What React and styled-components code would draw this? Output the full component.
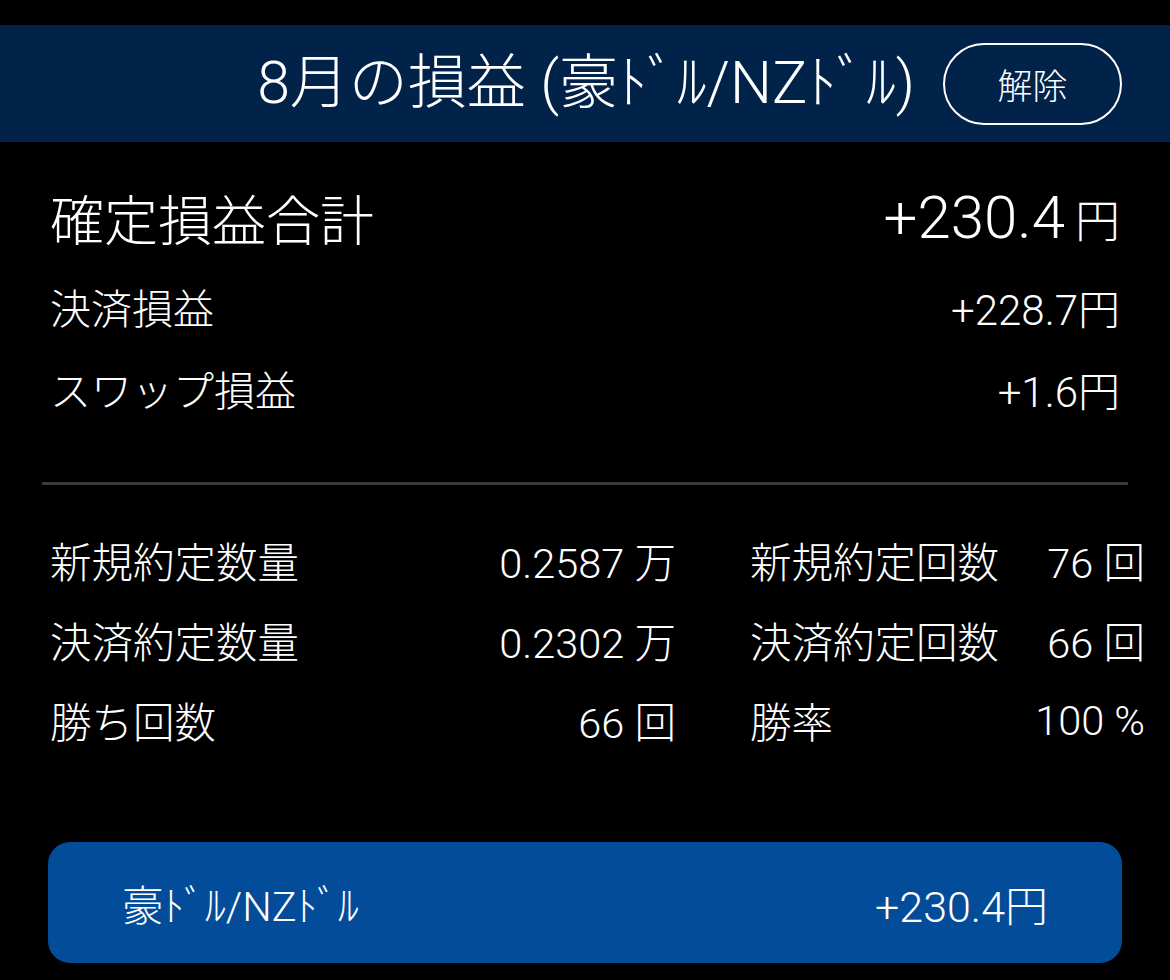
import styled, { createGlobalStyle } from 'styled-components';

const GlobalStyle = createGlobalStyle`
  html, body {
    margin: 0;
    padding: 0;
    background: #000;
  }
  body {
    font-family: Roboto, "Noto Sans CJK JP", sans-serif;
    font-weight: 300;
    color: #fff;
  }
`;

const stats = [
  { id: 1, label: '新規約定数量', value: '0.2587', unit: '万' },
  { id: 2, label: '新規約定回数', value: '76', unit: '回' },
  { id: 3, label: '決済約定数量', value: '0.2302', unit: '万' },
  { id: 4, label: '決済約定回数', value: '66', unit: '回' },
  { id: 5, label: '勝ち回数', value: '66', unit: '回' },
  { id: 6, label: '勝率', value: '100', unit: '%' },
];

function App() {
  return (
    <>
      <GlobalStyle />
      <Page>
        <Header>
          <Title>8月の損益 (豪ﾄﾞﾙ/NZﾄﾞﾙ)</Title>
          <ClearButton type="button">解除</ClearButton>
        </Header>

        <Summary>
          <TotalRow>
            <span>確定損益合計</span>
            <Amount>
              +230.4<Yen>円</Yen>
            </Amount>
          </TotalRow>
          <SubRow>
            <span>決済損益</span>
            <span>+228.7円</span>
          </SubRow>
          <SubRow>
            <span>スワップ損益</span>
            <span>+1.6円</span>
          </SubRow>
        </Summary>

        <Divider />

        <StatsGrid>
          {stats.map(({ id, label, value, unit }) => (
            <StatCell key={id}>
              <span>{label}</span>
              <span>
                {value} {unit}
              </span>
            </StatCell>
          ))}
        </StatsGrid>

        <PairCard>
          <span>豪ﾄﾞﾙ/NZﾄﾞﾙ</span>
          <span>+230.4円</span>
        </PairCard>
      </Page>
    </>
  );
}

const Page = styled.div`
  width: 1170px;
  height: 980px;
  padding-top: 25px;
  box-sizing: border-box;
  background: #000;
  overflow: hidden;
`;

const Header = styled.header`
  height: 117px;
  display: flex;
  align-items: center;
  justify-content: flex-end;
  gap: 28px;
  padding-right: 48px;
  background: #012349;
`;

const Title = styled.h1`
  margin: 0 0 3px;
  font-size: 59px;
  font-weight: 300;
  line-height: 1;
  white-space: nowrap;
`;

const ClearButton = styled.button`
  width: 179px;
  height: 82px;
  border: 2.5px solid #fff;
  border-radius: 41px;
  background: transparent;
  color: #fff;
  font-family: Roboto, "Noto Sans CJK JP", sans-serif;
  font-weight: 300;
  font-size: 35px;
  padding: 0;
  cursor: pointer;
`;

const Summary = styled.section`
  padding: 35px 50px 0;
`;

const TotalRow = styled.div`
  height: 80px;
  display: flex;
  align-items: center;
  justify-content: space-between;
  font-size: 54px;
  margin-bottom: 8px;
`;

const Amount = styled.span`
  font-size: 60px;
  display: flex;
  align-items: baseline;
`;

const Yen = styled.span`
  font-size: 45px;
  margin-left: 10px;
`;

const SubRow = styled.div`
  height: 82px;
  display: flex;
  align-items: center;
  justify-content: space-between;
  font-size: 41px;

  span:last-child {
    font-size: 42px;
  }
`;

const Divider = styled.hr`
  margin: 53px 42px 0;
  border: none;
  height: 3px;
  background: #3a3a3a;
`;

const StatsGrid = styled.div`
  display: grid;
  grid-template-columns: 626px 395px;
  column-gap: 74px;
  grid-auto-rows: 80px;
  padding: 35px 25px 0 50px;
`;

const StatCell = styled.div`
  display: flex;
  align-items: center;
  justify-content: space-between;
  font-size: 41.5px;
  white-space: pre;
`;

const PairCard = styled.div`
  margin: 82px 48px 0;
  height: 121px;
  border-radius: 22px;
  background: #024c99;
  display: flex;
  align-items: center;
  justify-content: space-between;
  padding: 0 74px;
  font-size: 41.5px;

  span:last-child {
    font-size: 43px;
  }
`;

export default App;
